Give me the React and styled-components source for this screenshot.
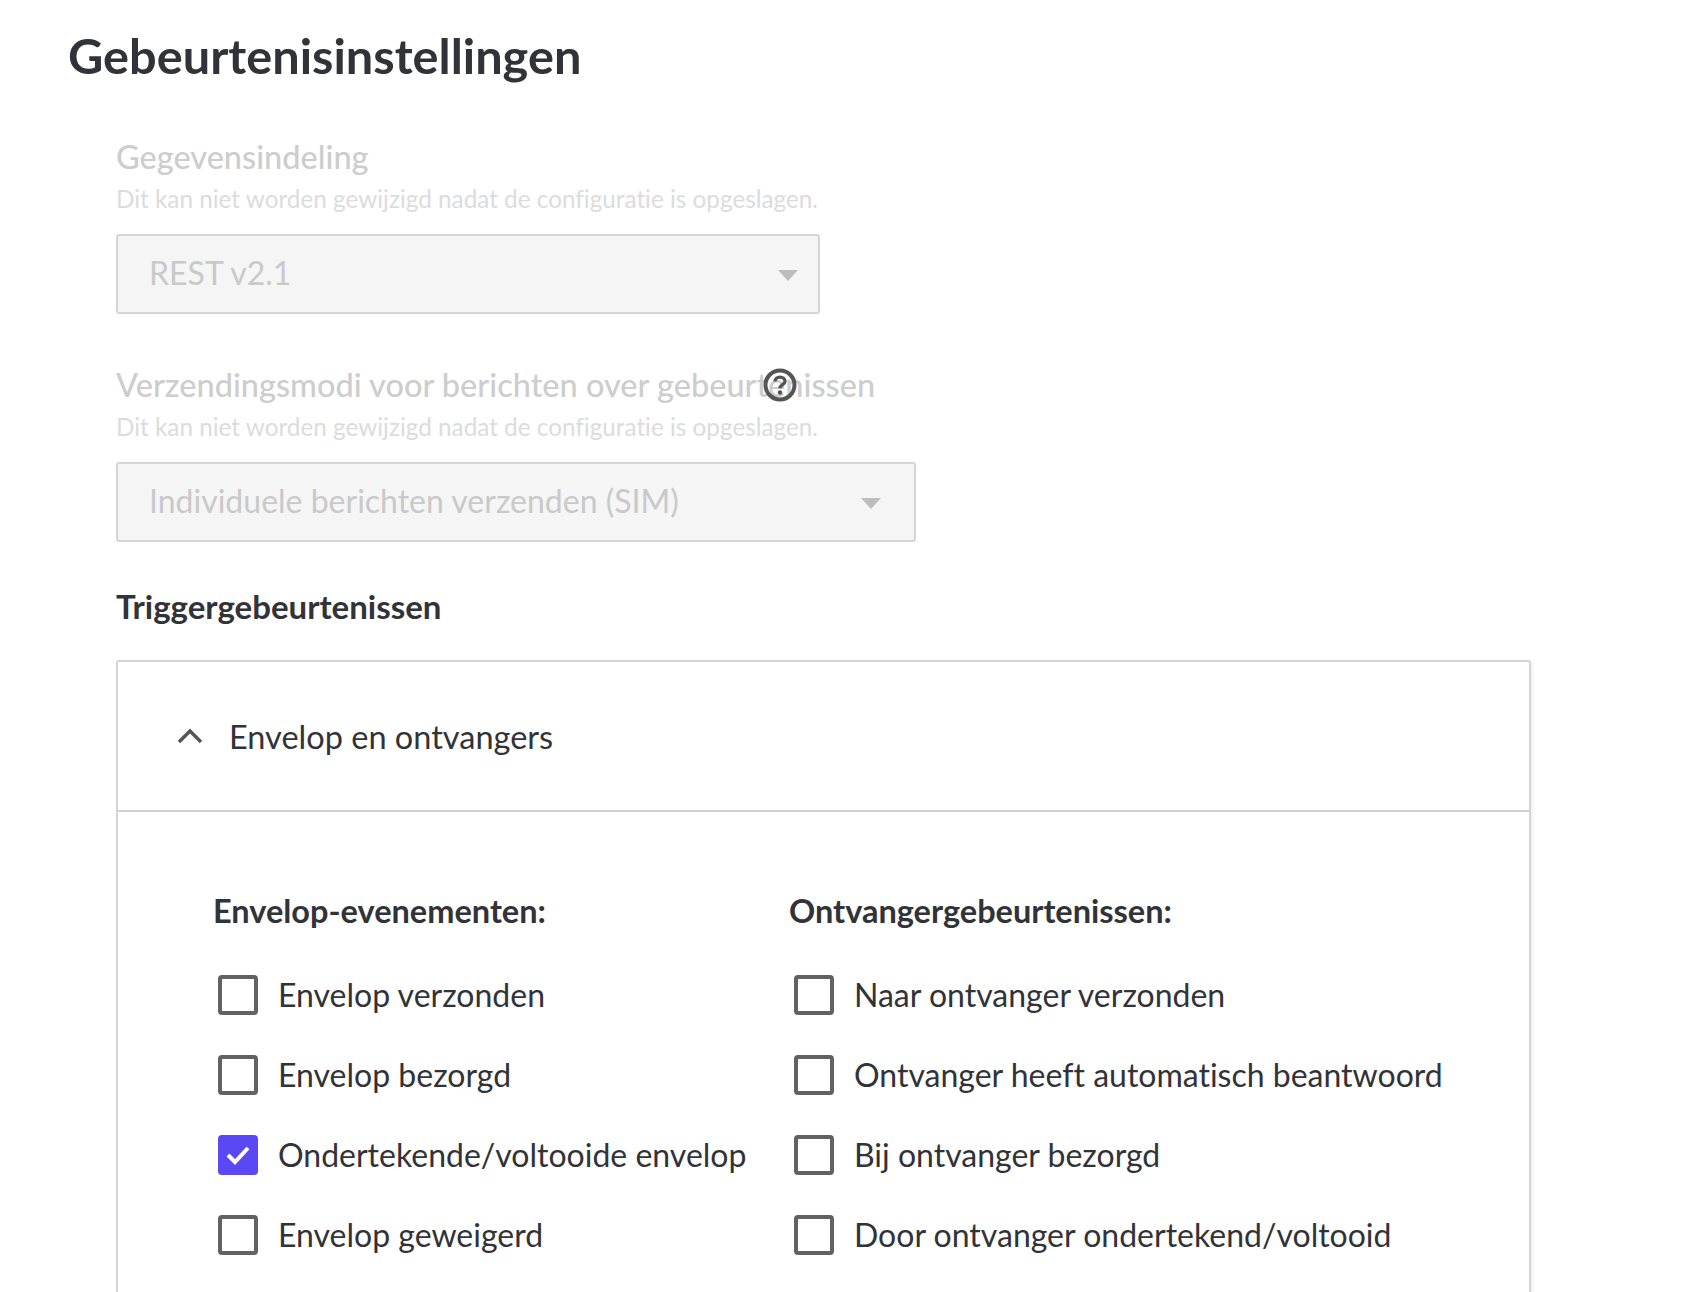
import React from "react";
import styled, { createGlobalStyle } from "styled-components";

const Global = createGlobalStyle`
  html, body { margin: 0; padding: 0; background: #fff; }
  body { font-family: Lato, "Open Sans", sans-serif; color: #323338; height: 1292px; overflow: hidden; font-variant-ligatures: none; }
`;
const Page = styled.div`
  padding: 25px 0 0 68px;
  height: 1267px;
  overflow: hidden;
`;
const Title = styled.h1`
  margin: 0 0 52px;
  font-size: 48.7px;
  line-height: 60px;
  font-weight: 700;
  color: #323338;
`;
const Body = styled.div`
  padding-left: 48px;
  display: flex;
  flex-direction: column;
  align-items: flex-start;
`;
const Field = styled.div`
  margin-bottom: 51px;
`;
const LabelRow = styled.div`
  position: relative;
  font-size: 32.5px;
  line-height: 40px;
  color: #cdcdcd;
  font-weight: 500;
`;
const Help = styled.span`
  position: absolute;
  left: ${(p) => p.$left}px;
  top: 3px;
  width: 34px;
  height: 34px;
  display: flex;
`;
const Hint = styled.div`
  font-size: 24.3px;
  line-height: 30px;
  color: #dcdcdc;
  margin: 7px 0 20px;
`;
const Select = styled.div`
  box-sizing: border-box;
  width: ${(p) => p.$w}px;
  height: 80px;
  border: 2px solid #d6d4d4;
  border-radius: 3px;
  background: #f5f5f5;
  display: flex;
  align-items: center;
  justify-content: space-between;
  padding: 0 ${(p) => p.$pr}px 4px 31px;
  font-size: 32px;
  color: #c9c9c9;
`;
const Caret = styled.span`
  width: 0;
  height: 0;
  border-left: 10px solid transparent;
  border-right: 10px solid transparent;
  border-top: 11px solid #bdbdbd;
  margin-top: 7px;
`;
const Section = styled.h2`
  margin: -9px 0 32px;
  font-size: 33px;
  line-height: 44px;
  font-weight: 700;
  color: #323338;
`;
const Card = styled.div`
  box-sizing: border-box;
  width: 1415px;
  height: 700px;
  border: 2px solid #d6d3d3;
  border-bottom: 0;
  border-radius: 3px 3px 0 0;
  box-shadow: 2px 2px 3px rgba(0, 0, 0, 0.06);
`;
const CardHead = styled.div`
  box-sizing: border-box;
  height: 150px;
  border-bottom: 2px solid #d0d0d0;
  display: flex;
  align-items: center;
  padding-left: 58px;
  gap: 25px;
  font-size: 32.5px;
  color: #323338;
`;
const Columns = styled.div`
  display: flex;
  padding: 77px 0 0 95px;
`;
const Column = styled.div`
  width: 576px;
  flex: none;
`;
const ColTitle = styled.div`
  font-size: 32.5px;
  line-height: 44px;
  font-weight: 700;
  margin-bottom: 42px;
`;
const Row = styled.div`
  display: flex;
  align-items: center;
  height: 40px;
  margin: 0 0 40px 5px;
  gap: 20px;
  font-size: 32px;
  color: #323338;
  white-space: nowrap;
`;
const RowText = styled.span`
  padding-bottom: 2px;
`;
const Box = styled.span`
  box-sizing: border-box;
  width: 40px;
  height: 40px;
  flex: none;
  border-radius: 4px;
  border: ${(p) => (p.$on ? "0" : "4px solid #626262")};
  background: ${(p) => (p.$on ? "#5a48f5" : "#fff")};
  display: flex;
  align-items: center;
  justify-content: center;
`;

const left = ["Envelop verzonden", "Envelop bezorgd", "Ondertekende/voltooide envelop", "Envelop geweigerd"];
const right = ["Naar ontvanger verzonden", "Ontvanger heeft automatisch beantwoord", "Bij ontvanger bezorgd", "Door ontvanger ondertekend/voltooid"];
const HINT = "Dit kan niet worden gewijzigd nadat de configuratie is opgeslagen.";

export default function App() {
  return (
    <Page>
      <Global />
      <Title>Gebeurtenisinstellingen</Title>
      <Body>
        <Field>
          <LabelRow>Gegevensindeling</LabelRow>
          <Hint>{HINT}</Hint>
          <Select $w={704} $pr={20}>REST v2.1<Caret /></Select>
        </Field>
        <Field>
          <LabelRow>
            Verzendingsmodi voor berichten over gebeurtenissen
            <Help $left={647}>
              <svg width="34" height="34" viewBox="0 0 34 34" fill="none">
                <circle cx="17" cy="17" r="14.5" stroke="#555" strokeWidth="4" />
                <path d="M12 13.5c0-2.8 2.2-4.4 5-4.4s5 1.7 5 4.2c0 3.4-5 3.4-5 6.9" stroke="#555" strokeWidth="3.4" />
                <circle cx="17" cy="24.5" r="2.2" fill="#555" />
              </svg>
            </Help>
          </LabelRow>
          <Hint>{HINT}</Hint>
          <Select $w={800} $pr={33}>Individuele berichten verzenden (SIM)<Caret /></Select>
        </Field>
        <Section>Triggergebeurtenissen</Section>
        <Card>
          <CardHead>
            <svg width="28" height="18" viewBox="0 0 28 18" fill="none">
              <path d="M3 15L14 4l11 11" stroke="#555" strokeWidth="3.5" />
            </svg>
            Envelop en ontvangers
          </CardHead>
          <Columns>
            {[["Envelop-evenementen:", left], ["Ontvangergebeurtenissen:", right]].map(([t, items]) => (
              <Column key={t}>
                <ColTitle>{t}</ColTitle>
                {items.map((i) => {
                  const on = i === "Ondertekende/voltooide envelop";
                  return (
                    <Row key={i}>
                      <Box $on={on}>
                        {on && (
                          <svg width="26" height="22" viewBox="0 0 26 22" fill="none">
                            <path d="M3 11l7 7L23 4" stroke="#fff" strokeWidth="4" />
                          </svg>
                        )}
                      </Box>
                      <RowText>{i}</RowText>
                    </Row>
                  );
                })}
              </Column>
            ))}
          </Columns>
        </Card>
      </Body>
    </Page>
  );
}
